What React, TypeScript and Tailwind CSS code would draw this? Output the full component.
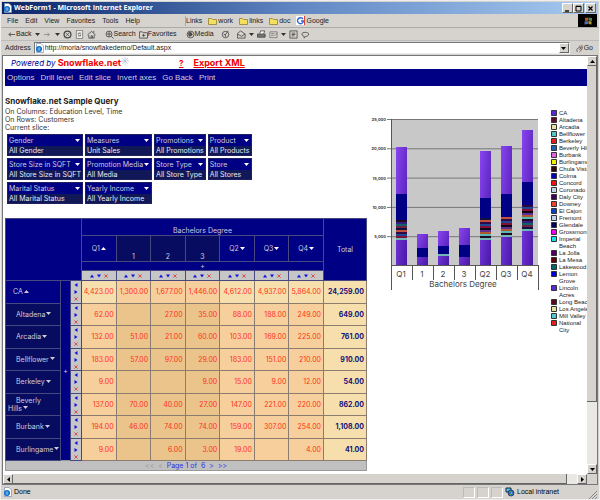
import React from 'react';

const menus = ['File', 'Edit', 'View', 'Favorites', 'Tools', 'Help'];
const folders = ['work', 'links', 'doc'];

const slices = [
  [
    { name: 'Gender', value: 'All Gender' },
    { name: 'Measures', value: 'Unit Sales' },
    { name: 'Promotions', value: 'All Promotions' },
    { name: 'Product', value: 'All Products' },
  ],
  [
    { name: 'Store Size in SQFT', value: 'All Store Size in SQFT' },
    { name: 'Promotion Media', value: 'All Media' },
    { name: 'Store Type', value: 'All Store Type' },
    { name: 'Store', value: 'All Stores' },
  ],
  [
    { name: 'Marital Status', value: 'All Marital Status' },
    { name: 'Yearly Income', value: 'All Yearly Income' },
  ],
];

const columns = [
  { label: 'Q1', mark: 'up' },
  { label: '1' },
  { label: '2' },
  { label: '3' },
  { label: 'Q2', mark: 'down' },
  { label: 'Q3', mark: 'down' },
  { label: 'Q4', mark: 'down' },
];

const rows = [
  { name: 'CA', cells: ['4,423.00', '1,300.00', '1,677.00', '1,446.00', '4,612.00', '4,937.00', '5,864.00'], total: '24,259.00' },
  { name: 'Altadena', cells: ['62.00', '', '27.00', '35.00', '88.00', '188.00', '249.00'], total: '649.00' },
  { name: 'Arcadia', cells: ['132.00', '51.00', '21.00', '60.00', '103.00', '169.00', '225.00'], total: '761.00' },
  { name: 'Bellflower', cells: ['183.00', '57.00', '97.00', '29.00', '183.00', '151.00', '210.00'], total: '910.00' },
  { name: 'Berkeley', cells: ['9.00', '', '', '9.00', '15.00', '9.00', '12.00'], total: '54.00' },
  { name: 'Beverly\nHills', cells: ['137.00', '70.00', '40.00', '27.00', '147.00', '221.00', '220.00'], total: '862.00' },
  { name: 'Burbank', cells: ['194.00', '46.00', '74.00', '74.00', '159.00', '307.00', '254.00'], total: '1,108.00' },
  { name: 'Burlingame', cells: ['9.00', '', '6.00', '3.00', '19.00', '', '4.00'], total: '41.00' },
];

const legend = [
  ['CA', '#5a28d8'],
  ['Altadena', '#5c0a30'],
  ['Arcadia', '#e8e0a0'],
  ['Bellflower', '#50c8c8'],
  ['Berkeley', '#e02020'],
  ['Beverly Hills', '#2060b0'],
  ['Burbank', '#e060e0'],
  ['Burlingame', '#f0f000'],
  ['Chula Vista', '#300808'],
  ['Colma', '#0000c0'],
  ['Concord', '#f01010'],
  ['Coronado', '#c0d0e8'],
  ['Daly City', '#400050'],
  ['Downey', '#f04030'],
  ['El Cajon', '#1040c0'],
  ['Fremont', '#c0d0e8'],
  ['Glendale', '#000060'],
  ['Grossmont', '#f000f0'],
  ['Imperial Beach', '#10e0e8'],
  ['La Jolla', '#500060'],
  ['La Mesa', '#600008'],
  ['Lakewood', '#006868'],
  ['Lemon Grove', '#0000d0'],
  ['Lincoln Acres', '#5a28d8'],
  ['Long Beach', '#5c0a20'],
  ['Los Angeles', '#e8e0a0'],
  ['Mill Valley', '#50c8c8'],
  ['National City', '#e02020'],
];

// top of the bar, top and bottom of the navy block, end of the thin stripes
const bars = [
  { label: 'Q1', x: 36, top: 47, navy: 94, mid: 120, end: 140 },
  { label: '1', x: 57, top: 134, navy: 148, mid: 157, end: 157 },
  { label: '2', x: 78, top: 131, navy: 146, mid: 154, end: 156 },
  { label: '3', x: 99, top: 128, navy: 145, mid: 157, end: 157 },
  { label: 'Q2', x: 120, top: 51, navy: 98, mid: 118, end: 139 },
  { label: 'Q3', x: 141, top: 46, navy: 94, mid: 117, end: 137 },
  { label: 'Q4', x: 162, top: 30, navy: 82, mid: 105, end: 131 },
];

const stripes = ['#200820', '#302080', '#106068', '#702040', '#101040', '#c05040', '#300848', '#204890', '#801038', '#100818', '#603090', '#b05830', '#58b8b8'];

const Caret = ({ up = false, className = 'text-white' }: { up?: boolean; className?: string }) => (
  <svg viewBox="0 0 5 3" className={`inline-block w-[5px] h-[3px] ${className}`} fill="currentColor">
    <path d={up ? 'M0 3L2.5 0L5 3Z' : 'M0 0H5L2.5 3Z'} />
  </svg>
);

const arrowPaths = {
  up: 'M0 3.5L2 .5L4 3.5Z',
  down: 'M0 .5H4L2 3.5Z',
  left: 'M3.5 0V4L.5 2Z',
  right: 'M.5 0V4L3.5 2Z',
};

const Arrow = ({ dir }: { dir: keyof typeof arrowPaths }) => (
  <svg viewBox="0 0 4 4" className="w-1 h-1" fill="#1010e0"><path d={arrowPaths[dir]} /></svg>
);

const Cross = () => (
  <svg viewBox="0 0 5 5" className="w-1 h-1 text-[#e03030]" stroke="currentColor">
    <path d="M.5 .5L4.5 4.5M4.5 .5L.5 4.5" />
  </svg>
);

const PageIcon = () => (
  <svg viewBox="0 0 9 10" className="w-[9px] h-[10px] shrink-0">
    <path d="M1.5 .5H6L8.5 3V9.5H1.5Z" fill="#fff" stroke="#7890b0" strokeWidth=".7" />
    <circle cx="4" cy="6" r="2.3" fill="#b8dcf8" stroke="#1070c8" strokeWidth="1.5" />
    <path d="M2 6H6" stroke="#1070c8" />
  </svg>
);

const Folder = () => (
  <svg viewBox="0 0 9 8" className="w-[9px] h-2">
    <path d="M.5 7.5V1.5H3.5L4.5 2.5H8.5V7.5Z" fill="#f4e060" stroke="#908030" strokeWidth=".8" />
  </svg>
);

const icons: Record<string, React.ReactNode> = {
  back: <path d="M9 5H2M4.5 3L2 5L4.5 7" />,
  forward: <path d="M1 5H7M5 3L7 5L5 7" stroke="#888" />,
  stop: <><circle cx="5" cy="5" r="3.8" strokeWidth="1.4" /><path d="M3.5 3.5L6.5 6.5M6.5 3.5L3.5 6.5" /></>,
  refresh: <><path d="M1.5 .5H8.5V9.5H1.5Z" fill="#eee" stroke="#777" /><path d="M6.5 3.5H4L3.5 5M3.5 6.5H6L6.5 5" /></>,
  home: <><path d="M.5 5.5L5 1.5L9.5 5.5M7.5 1V3" /><path d="M2 5.5V9H8V5.5M4.5 9V6.5H6V9" /></>,
  search: <><circle cx="4.5" cy="4.5" r="3.3" /><path d="M2 4.5H7M4.5 1.5V7.5M7 7L9.5 9.5" /></>,
  star: <path d="M.5 2H3.5L4.5 3H9.5V9H.5ZM5 4.5V7.5M3.5 6H7" />,
  media: <><circle cx="5" cy="5" r="3.8" /><circle cx="4.5" cy="4.5" r="2" /><path d="M4 3L7 5L4 7Z" fill="#444" /></>,
  history: <><circle cx="5" cy="5" r="3.6" /><path d="M8 1L5 5H3M5 5V7.5" /></>,
  mail: <path d="M.5 4L4 1L9 4.5V9H.5ZM.5 4.5L5 7L9 4.5" />,
  print: <><path d="M3 4L4 1H8.5L7.5 4" fill="#fff" /><path d="M.5 4.5H9V8H.5Z" fill="#777" /></>,
  edit: <path d="M1 2H9V8.5H1ZM2.5 4H6M2.5 6H5M6 6.5L9.5 3" stroke="#777" />,
  discuss: <path d="M1 1H9V9H1ZM3 3.5H7M3 5H7M3 6.5H6" />,
  chat: <path d="M1 4.5C1 2 8.5 2 8.5 4.5S6 7 5 7L3.5 9V7C2 6.5 1 6 1 4.5Z" />,
  go: <path d="M3 9C1 7 2 4 6 4M4.5 2L7 4L5 6.5M7 1C9 3 8 7 5 8.5" />,
};

const ToolIcon = ({ name }: { name: string }) => (
  <svg viewBox="0 0 10 10" className="w-[9px] h-[9px] shrink-0" fill="none" stroke="#444" strokeWidth=".9">
    {icons[name]}
  </svg>
);

const ToolButton = ({ icon, label, drop, className = '' }: { icon: string; label?: string; drop?: boolean; className?: string }) => (
  <button aria-label={label || icon} className={`flex items-center ${className}`}>
    <ToolIcon name={icon} />
    {label && <span>{label}</span>}
    {drop && <Caret className="ml-[3px] text-[#333]" />}
  </button>
);

const raised = 'bg-[#d6d3ce] border border-t-white border-l-white border-r-[#666] border-b-[#666] flex items-center justify-center';

const TitleBar = () => (
  <header className="h-3 mx-px flex items-center bg-linear-to-r from-[#0c2468] via-[#6288c4] to-[#a6caf0] pl-px pr-0.5">
    <PageIcon />
    <h1 className="ml-0.5 flex-1 text-white font-bold text-[7px] font-['Open_Sans',sans-serif]">WebForm1 - Microsoft Internet Explorer</h1>
    <button aria-label="Minimize" className={`${raised} w-[11px] h-[10px]`}>
      <svg viewBox="0 0 7 7" className="w-[7px] h-[7px]" stroke="#000"><path d="M1 6H5" strokeWidth="1.4" /></svg>
    </button>
    <button aria-label="Maximize" className={`${raised} w-[11px] h-[10px]`}>
      <svg viewBox="0 0 7 7" className="w-[7px] h-[7px]" stroke="#000" fill="none"><path d="M1 1.2H6V6H1Z" /><path d="M1 1.5H6" /></svg>
    </button>
    <button aria-label="Close" className={`${raised} w-[11px] h-[10px] ml-px`}>
      <svg viewBox="0 0 7 7" className="w-[7px] h-[7px]" stroke="#000"><path d="M1.5 1.5L5.5 5.5M5.5 1.5L1.5 5.5" strokeWidth="1.2" /></svg>
    </button>
  </header>
);

const MenuBar = () => (
  <div className="h-[14px] flex items-center pl-[6px] pr-0.5 border-b border-[#aaa] text-[#222]">
    <nav className="flex gap-[7px] w-[178px]">
      {menus.map((m) => <button key={m}>{m}</button>)}
    </nav>
    <div className="flex items-center gap-[6px] border-l border-[#aaa] flex-1">
      <span>Links</span>
      {folders.map((f) => (
        <a key={f} href="#" className="flex items-center gap-px"><Folder />{f}</a>
      ))}
      <a href="#" className="flex items-center gap-px">
        <svg viewBox="0 0 9 9" className="w-[9px] h-[9px]">
          <path d="M0 0H9V9H0Z" fill="#fff" />
          <path d="M7 3A3 3 0 1 0 7.5 5H5" fill="none" stroke="#2868d8" strokeWidth="1.4" />
          <path d="M8.5 0V9" stroke="#e04030" />
        </svg>
        Google
      </a>
    </div>
    <div className="w-[19px] h-[13px] bg-black flex items-center justify-center">
      <svg viewBox="0 0 10 8" className="w-[10px] h-2">
        <path d="M2 1L5 .5V3.5L2 4Z" fill="#c05030" />
        <path d="M5.5 .5L9 1V4L5.5 3.5Z" fill="#508850" />
        <path d="M1.5 4.5L5 4V7L1.5 7.5Z" fill="#4870b8" />
        <path d="M5.5 4L8.5 4.5V7.5L5.5 7Z" fill="#b89838" />
      </svg>
    </div>
  </div>
);

const ToolBar = () => (
  <div className="h-[13px] flex items-center gap-[3px] pl-[6px] border-b border-[#bbb] text-[#222]">
    <ToolButton icon="back" label="Back" drop />
    <ToolButton icon="forward" drop />
    <ToolButton icon="stop" />
    <ToolButton icon="refresh" />
    <ToolButton icon="home" />
    <ToolButton icon="search" label="Search" className="ml-1.5" />
    <ToolButton icon="star" label="Favorites" />
    <ToolButton icon="media" label="Media" className="ml-1.5" />
    <ToolButton icon="history" className="ml-1" />
    <ToolButton icon="mail" drop className="ml-1" />
    <ToolButton icon="print" />
    <ToolButton icon="edit" drop />
    <ToolButton icon="discuss" />
    <ToolButton icon="chat" />
  </div>
);

const AddressBar = () => (
  <div className="h-[14px] flex items-center pl-1 pr-1.5 gap-[3px] text-[#222]">
    <label htmlFor="address">Address</label>
    <div className="flex-1 h-3 flex items-center bg-white border border-t-[#777] border-l-[#777] border-r-[#eee] border-b-[#eee]">
      <PageIcon />
      <input id="address" defaultValue="http://moria/snowflakedemo/Default.aspx" className="flex-1 h-[10px] pl-px outline-none" />
      <button aria-label="Show addresses" className={`${raised} w-[10px] h-[10px]`}><Caret className="text-black" /></button>
    </div>
    <button className="flex items-center pl-0.5"><ToolIcon name="go" />Go</button>
  </div>
);

const Slices = () => (
  <table className="border-separate border-spacing-x-0.5 border-spacing-y-0.5 text-white text-[7px] leading-[10px]">
    <tbody>
      {slices.map((line, i) => (
        <tr key={i}>
          {line.map((s) => (
            <td key={s.name} className="p-0 border border-[#202060] bg-[#101858]">
              <button className="w-full h-[11px] pl-px pr-0.5 bg-[#000084] flex items-center justify-between gap-px text-[#ccccdd]">
                {s.name}<Caret />
              </button>
              <div className="h-[9px] px-px leading-[9px] whitespace-nowrap text-[#e8e8f0]">{s.value}</div>
            </td>
          ))}
        </tr>
      ))}
    </tbody>
  </table>
);

const cell = 'border border-[#8c7c70] p-0';
const head = 'border border-[#484880] p-0 font-normal';

const Pivot = () => (
  <table className="table-fixed border-collapse w-[362px] mt-3 text-[7px] leading-2 bg-[#000084] text-[#ccccdd]">
    <colgroup>
      <col className="w-[55px]" />
      <col className="w-[10px]" />
      <col className="w-[11px]" />
      {columns.map((c) => <col key={c.label} />)}
      <col className="w-[43px]" />
    </colgroup>
    <thead>
      <tr className="h-[17px]">
        <td rowSpan={4} colSpan={3} className={head} />
        <th colSpan={7} className={`${head} align-bottom`}>Bachelors Degree</th>
        <th rowSpan={4} className={head}>Total</th>
      </tr>
      <tr className="h-[26px]">
        {columns.map((c) => (
          <th key={c.label} className={`${head} ${c.mark ? '' : 'bg-[#080c60] align-bottom'}`}>
            {c.mark ? <button className="inline-flex items-center gap-px">{c.label}<Caret up={c.mark === 'up'} /></button> : c.label}
          </th>
        ))}
      </tr>
      <tr className="h-[9px]">
        <th colSpan={7} className={head}>+</th>
      </tr>
      <tr className="h-[10px]">
        {columns.map((c) => (
          <td key={c.label} className={`${head} bg-[#c6c6c6]`}>
            <div className="flex items-center justify-center gap-[3px]">
              <Arrow dir="up" /><Arrow dir="down" /><Cross />
            </div>
          </td>
        ))}
      </tr>
    </thead>
    <tbody>
      {rows.map((r, i) => (
        <tr key={r.name} className="odd:h-[23px] even:h-[22px]">
          <th className={`${head} text-left ${i ? 'bg-[#080c60] pl-0.5' : 'pl-[7px]'}`}>
            <button className="text-left whitespace-pre">
              <span className={i ? 'pl-2' : ''}>{r.name}</span>
              <Caret up={i === 0} className="ml-px mb-0.5" />
            </button>
          </th>
          {i === 0 && <td rowSpan={8} className="p-0 text-center">+</td>}
          <td className={`${head} bg-[#c6c6c6]`}>
            <div className="flex flex-col items-center gap-[3px]">
              <Arrow dir="left" /><Arrow dir="right" /><Cross />
            </div>
          </td>
          {r.cells.map((v, j) => {
            const inner = j > 0 && j < 4;
            const tint = i === 0 ? (inner ? 'bg-[#f7cf9c]' : 'bg-[#f7dfad]') : inner ? 'bg-[#ebc48c]' : 'bg-[#f7cf9c]';
            return <td key={j} className={`${cell} ${tint} pr-0.5 text-right text-[#ff3020]`}>{v}</td>;
          })}
          <td className={`${cell} bg-[#f7dfad] pr-0.5 text-right font-bold text-[#101078]`}>{r.total}</td>
        </tr>
      ))}
    </tbody>
    <tfoot>
      <tr className="h-[10px]">
        <td colSpan={11} className="p-0 border border-[#999] bg-[#c0c0c0] text-center text-[#3030e0]">
          <nav className="flex items-center justify-center gap-1">
            <span className="text-[#999]">&lt;&lt;</span>
            <span className="text-[#999]">&lt;</span>
            <span>Page 1 of&nbsp; 6</span>
            <a href="#">&gt;</a>
            <a href="#">&gt;&gt;</a>
          </nav>
        </td>
      </tr>
    </tfoot>
  </table>
);

const Chart = () => (
  <svg viewBox="2 0 178 200" className="w-[178px] h-[200px] font-['Inter',sans-serif]" fill="#444">
    <defs>
      <linearGradient id="bar" x1="0" y1="0" x2="1" y2="1">
        <stop offset="0" stopColor="#8844f0" />
        <stop offset="1" stopColor="#4818a8" />
      </linearGradient>
    </defs>
    <path d="M26 19H173V165H26Z" fill="#c8c8c8" />
    {['25,000', '20,000', '15,000', '10,000', '5,000'].map((t, i) => (
      <g key={t}>
        <path d={`M22 ${19.5 + i * 29.3}H173`} stroke="#777" />
        <text x="21" y={21 + i * 29.3} textAnchor="end" fontSize="4" fontWeight="bold" fill="#333">{t}</text>
      </g>
    ))}
    {bars.map((b, i) => (
      <g key={b.label}>
        <path d={`M${b.x - 5} ${b.top}H${b.x + 6}V165H${b.x - 5}Z`} fill="url(#bar)" />
        <path d={`M${b.x - 5} ${b.navy}H${b.x + 6}V${b.mid}H${b.x - 5}Z`} fill="#000084" />
        {stripes.map((s, k) => {
          const y = b.mid + k * 2;
          return y < b.end ? <path key={k} d={`M${b.x - 5} ${y}H${b.x + 6}V${y + 2}H${b.x - 5}Z`} fill={y + 2 >= b.end ? '#70b8b8' : stripes[(k + i) % 13]} /> : null;
        })}
        <text x={b.x} y="177" textAnchor="middle" fontSize="8">{b.label}</text>
      </g>
    ))}
    <path d="M26.5 19V190M173.5 165V190M26 165.5H174" stroke="#555" fill="none" />
    <path d="M47.5 165V180M68.5 165V180M89.5 165V180M110.5 165V180M131.5 165V180M152.5 165V180" stroke="#555" />
    <text x="98" y="187" textAnchor="middle" fontSize="8">Bachelors Degree</text>
  </svg>
);

const Legend = () => (
  <ul className="text-[6px] leading-[7px] text-[#222] font-['Liberation_Sans',sans-serif]">
    {legend.map(([name, color]) => {
      const wraps = /Imperial|Lemon|Lincoln|National/.test(name);
      return (
        <li key={name} className="flex gap-0.5">
          <svg viewBox="0 0 6 6" className="w-[6px] h-[6px] shrink-0"><path d="M.5 .5H5.5V5.5H.5Z" fill={color} stroke="#333" /></svg>
          <span className={wraps ? 'w-7' : 'whitespace-nowrap'}>{name}</span>
        </li>
      );
    })}
  </ul>
);

const Report = () => (
  <main className="flex-1 min-w-0 overflow-hidden bg-white pl-0.5 font-['Inter',sans-serif]">
    <div className="h-[13px] flex items-center text-[8px] font-bold text-[#f00000]">
      <p className="flex items-center pl-[6px] w-[174px]">
        <i className="font-normal text-[#000090] mr-0.5">Powered by</i>
        <span className="text-[9px]">Snowflake.net</span>
        <svg viewBox="0 0 8 8" className="w-2 h-2 mb-1" stroke="#b0c0d8" strokeWidth=".7"><path d="M4 0V8M0 4H8M1 1L7 7M7 1L1 7" /></svg>
      </p>
      <a href="#" className="underline mr-[10px]">?</a>
      <a href="#" className="underline text-[9px]">Export XML</a>
    </div>
    <nav className="h-[17px] bg-[#000084] flex items-center gap-[6px] pl-0.5 text-[#ccccdd] text-[8px] font-['Liberation_Sans',sans-serif]">
      {['Options', 'Drill level', 'Edit slice', 'Invert axes', 'Go Back', 'Print'].map((t) => <a key={t} href="#">{t}</a>)}
    </nav>
    <div className="flex">
      <div className="w-[362px] shrink-0 pt-[9px]">
        <h2 className="text-[8px] leading-[13px] font-bold text-[#222]">Snowflake.net Sample Query</h2>
        <div className="text-[7px] leading-2 text-[#333]">
          <p>On Columns: Education Level, Time</p>
          <p>On Rows: Customers</p>
          <p>Current slice:</p>
        </div>
        <Slices />
        <Pivot />
      </div>
      <div className="pt-[14px] shrink-0"><Chart /></div>
      <div className="pt-6 pl-1.5"><Legend /></div>
    </div>
  </main>
);

const App = () => (
  <div className="h-screen flex flex-col bg-[#d6d3ce] border border-[#eee] pt-px text-[7px] leading-[10px] text-black font-['Liberation_Sans',sans-serif] overflow-hidden">
    <TitleBar />
    <MenuBar />
    <ToolBar />
    <AddressBar />
    <div className="flex-1 min-h-0 flex flex-col mx-px border border-[#777]">
      <div className="flex-1 min-h-0 flex">
        <Report />
        <div className="w-[10px] flex flex-col justify-between bg-[#eae8e4]">
          <button aria-label="Scroll up" className={`${raised} h-[10px]`}><Caret up className="text-black" /></button>
          <div className="flex-1 max-h-[336px] mb-auto bg-[#d6d3ce] border-r border-b border-[#666]" />
          <button aria-label="Scroll down" className={`${raised} h-[10px]`}><Caret className="text-black" /></button>
        </div>
      </div>
      <div className="h-[10px] flex bg-[#eae8e4]">
        <button aria-label="Scroll left" className={`${raised} w-[10px]`}><Caret up className="-rotate-90 text-black" /></button>
        <div className="flex-1 bg-[#d6d3ce] border-r border-b border-[#666]" />
        <button aria-label="Scroll right" className={`${raised} w-[10px] ml-[10px]`}><Caret up className="rotate-90 text-black" /></button>
        <div className="w-[10px] bg-[#d6d3ce]" />
      </div>
    </div>
    <footer className="h-[14px] flex items-center gap-0.5 px-0.5">
      <div className="flex-1 flex items-center gap-0.5"><PageIcon />Done</div>
      <div className="w-3 h-[11px] border border-[#bbb] border-r-white border-b-white" />
      <div className="w-3 h-[11px] border border-[#bbb] border-r-white border-b-white" />
      <div className="w-3 h-[11px] border border-[#bbb] border-r-white border-b-white" />
      <div className="w-[82px] flex items-center gap-0.5">
        <svg viewBox="0 0 10 10" className="w-[10px] h-[10px]">
          <path d="M1 1H6V5H1Z" fill="#40c8e8" stroke="#224" />
          <circle cx="6" cy="6" r="3" fill="#3070c0" stroke="#224" strokeWidth=".7" />
          <path d="M5 4L7 6L5 8" stroke="#60c060" fill="none" />
        </svg>
        Local intranet
      </div>
      <svg viewBox="0 0 8 8" className="w-2 h-2 self-end" stroke="#888"><path d="M0 8L8 0M3 8L8 3M6 8L8 6" /></svg>
    </footer>
  </div>
);

export default App;
